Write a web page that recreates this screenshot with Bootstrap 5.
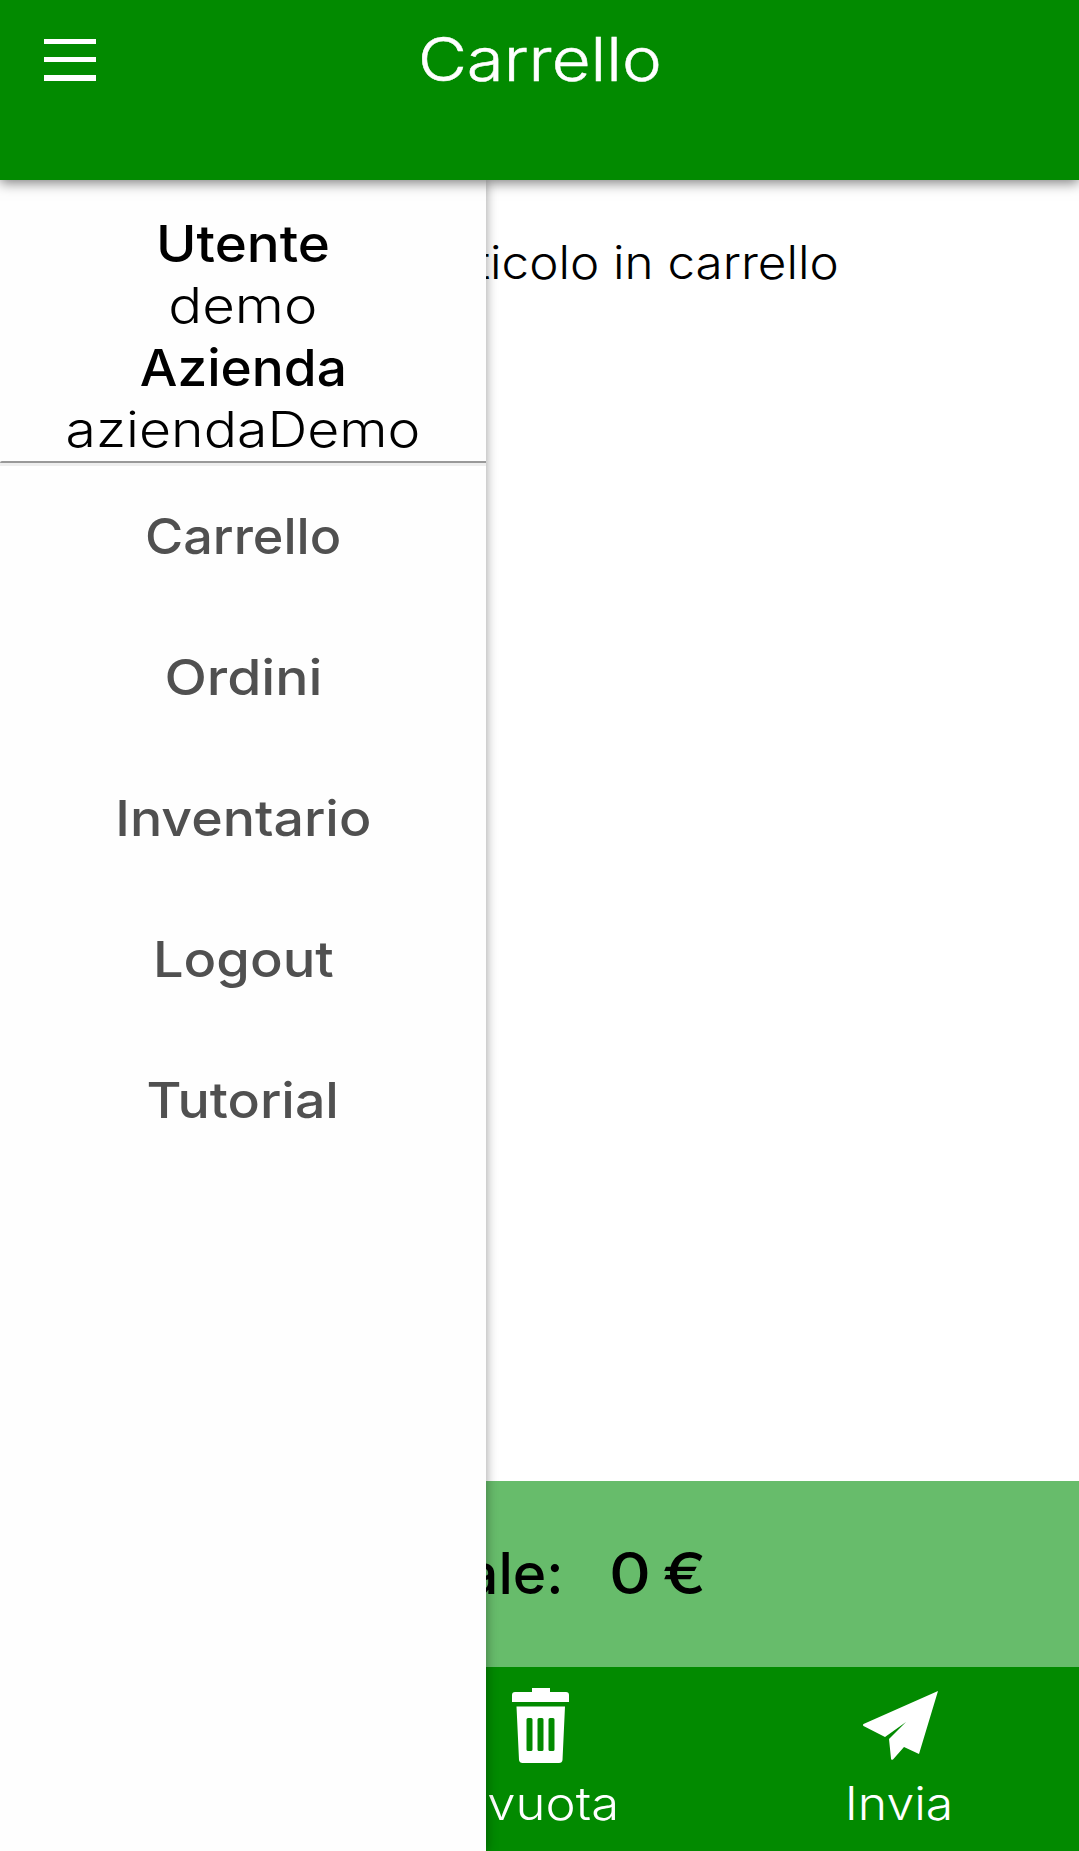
<!DOCTYPE html>
<html lang="it">
<head>
<meta charset="utf-8">
<meta name="viewport" content="width=device-width, initial-scale=1">
<title>Carrello</title>
<link href="https://cdn.jsdelivr.net/npm/bootstrap@5.3.0/dist/css/bootstrap.min.css" rel="stylesheet">
<style>
  body { font-family: Inter, "Open Sans", sans-serif; font-weight: 300; color: #000; background: #fff; }
  .app { height: 1851px; }
  .topbar { height: 180px; background: #028a00; box-shadow: 0 3px 12px rgba(0,0,0,.5); z-index: 30; }
  .topbar h1 { font-size: 60px; line-height: 118px; font-weight: 300; -webkit-text-stroke: .5px; }
  .burger { top: 39px; left: 44px; width: 52px; height: 42px; line-height: 0; }
  /* widened lettering */
  .tx { display: inline-block; transform: scaleX(var(--sx, 1)); }
  .sx-4 { --sx: 1.043; } .sx-7 { --sx: 1.073; } .sx-8 { --sx: 1.085; }
  .sx-10 { --sx: 1.106; } .sx-12 { --sx: 1.12; } .sx-13 { --sx: 1.13; } .sx-15 { --sx: 1.15; }
  .drawer { top: 180px; bottom: 0; left: 0; width: 486px; z-index: 20; padding-top: 33px; background: #fefefe; box-shadow: 0 0 11px rgba(0,0,0,.4); }
  .who { font-size: 49px; line-height: 62px; }
  .who dt { font-size: 51px; font-weight: 500; line-height: 61px; padding-bottom: 1px; }
  .who dd { margin: 0; }
  .rule { height: 5px; border-top: 2px solid #999; border-radius: 2px 0 0 0; background: #eee; }
  .entry { display: block; height: 141px; line-height: 141px; font-size: 50px; font-weight: 500; color: #505050; text-decoration: none; }
  .empty-note { padding-top: 52px; font-size: 46px; line-height: 60px; }
  .total { height: 186px; background: #67bc6b; font-size: 57px; font-weight: 500; padding-right: 6px; }
  .amount { margin-left: 45px; word-spacing: -5px; transform-origin: left; --sx: 1.14; }
  .actions { height: 184px; background: #028a00; color: #fff; font-size: 46px; line-height: 60px; }
  .pic { height: 106px; }
  .pic svg { display: block; margin: 0 auto; position: relative; left: 2px; }
  .trash { padding-top: 21px; }
  .plane { padding-top: 24px; }
  .empty-cart { margin-right: 4px; }
</style>
</head>
<body>
<div class="app position-relative d-flex flex-column overflow-hidden">
  <header class="topbar position-relative text-center text-white flex-shrink-0">
    <button class="burger btn p-0 border-0 rounded-0 position-absolute" aria-label="Menu">
      <svg width="52" height="42" viewBox="0 0 52 42" fill="#fff"><path d="M0 0h52v5H0zM0 18h52v5H0zM0 36h52v6H0z"/></svg>
    </button>
    <h1 class="m-0"><span class="tx sx-12">Carrello</span></h1>
  </header>

  <main class="flex-grow-1 text-center empty-note"><span class="tx sx-7">Nessun articolo in carrello</span></main>

  <section class="total d-flex align-items-center justify-content-center flex-shrink-0">
    <span>Totale:</span><span class="amount tx">0 €</span>
  </section>

  <footer class="actions flex-shrink-0">
    <div class="row g-0 text-center">
      <div class="col-4"></div>
      <div class="col-4">
        <div class="pic trash"><svg width="58" height="76" viewBox="0 0 58 76" fill="#fff">
          <path d="M20 0h18v4h16q3 0 3 3v7H0V7q0-3 3-3h17z"/>
          <path fill-rule="evenodd" d="M4.500 18.500H53L50.500 72q-.3 3-3.500 3H10.500q-3 0-3.500-3zM16 30q-1.500 0-1.500 1.500v30q0 1.500 1.500 1.500h3q1.500 0 1.500-1.500v-30q0-1.500-1.500-1.500zM27 30q-1.500 0-1.500 1.500v30q0 1.500 1.500 1.500h3q1.500 0 1.500-1.500v-30q0-1.500-1.500-1.500zM38 30q-1.500 0-1.500 1.500v30q0 1.500 1.500 1.500h3q1.500 0 1.500-1.500v-30q0-1.500-1.500-1.500z"/>
        </svg></div>
        <span class="tx sx-10 empty-cart">Svuota</span>
      </div>
      <div class="col-4">
        <div class="pic plane"><svg width="76" height="70" viewBox="0 0 76 70" fill="#fff">
          <path d="M75 0 56 63l-15-7-11 12.500q-2 1-2-1L26 48 43 31 22 46 .5 35q-1-1 0-2z"/>
        </svg></div>
        <span class="tx sx-8">Invia</span>
      </div>
    </div>
  </footer>

  <nav class="drawer position-absolute text-center">
    <dl class="who m-0">
      <dt><span class="tx sx-7">Utente</span></dt>
      <dd><span class="tx sx-15">demo</span></dd>
      <dt><span class="tx sx-4">Azienda</span></dt>
      <dd><span class="tx sx-13">aziendaDemo</span></dd>
    </dl>
    <div class="rule"></div>
    <a class="entry" href="#"><span class="tx sx-4">Carrello</span></a>
    <a class="entry" href="#"><span class="tx sx-10">Ordini</span></a>
    <a class="entry" href="#"><span class="tx sx-7">Inventario</span></a>
    <a class="entry" href="#"><span class="tx sx-8">Logout</span></a>
    <a class="entry" href="#"><span class="tx sx-7">Tutorial</span></a>
  </nav>
</div>
<script src="https://cdn.jsdelivr.net/npm/bootstrap@5.3.0/dist/js/bootstrap.bundle.min.js"></script>
</body>
</html>
